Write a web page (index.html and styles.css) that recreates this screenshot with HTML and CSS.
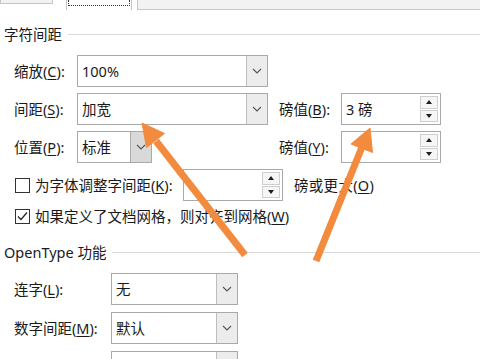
FILE: index.html
```html
<!DOCTYPE html>
<html lang="zh-CN">
<head>
<meta charset="utf-8">
<title>字体 - 高级</title>
<link rel="stylesheet" href="styles.css">
</head>
<body>
<div class="tabs">
  <div class="tab-left"></div>
  <div class="tab-active"><div class="focus"></div></div>
  <div class="tab-rest"></div>
</div>

<div class="group-title first"><span>字符间距</span><i class="rule"></i></div>
<div class="section">
  <div class="row">
    <span class="lbl">缩放(<u>C</u>):</span>
    <div class="combo wide"><span class="val">100%</span><span class="drop"><svg width="10" height="6" viewBox="0 0 10 6"><path d="M1 1 L5 5 L9 1" fill="none" stroke="#555" stroke-width="1.1"/></svg></span></div>
  </div>
  <div class="row">
    <span class="lbl">间距(<u>S</u>):</span>
    <div class="combo wide"><span class="val">加宽</span><span class="drop"><svg width="10" height="6" viewBox="0 0 10 6"><path d="M1 1 L5 5 L9 1" fill="none" stroke="#555" stroke-width="1.1"/></svg></span></div>
    <span class="lbl2">磅值(<u>B</u>):</span>
    <div class="spin"><span class="val">3 磅</span><span class="spin-btns"><i class="up"></i><i class="down"></i></span></div>
  </div>
  <div class="row">
    <span class="lbl">位置(<u>P</u>):</span>
    <div class="combo narrow"><span class="val">标准</span><span class="drop pressed"><svg width="10" height="6" viewBox="0 0 10 6"><path d="M1 1 L5 5 L9 1" fill="none" stroke="#555" stroke-width="1.1"/></svg></span></div>
    <span class="lbl2 far">磅值(<u>Y</u>):</span>
    <div class="spin"><span class="val"></span><span class="spin-btns"><i class="up"></i><i class="down"></i></span></div>
  </div>
  <div class="row">
    <span class="check"></span>
    <span class="check-lbl fixed">为字体调整字间距(<u>K</u>):</span>
    <div class="spin"><span class="val"></span><span class="spin-btns"><i class="up"></i><i class="down"></i></span></div>
    <span class="after">磅或更大(<u>O</u>)</span>
  </div>
  <div class="row short">
    <span class="check"><svg width="13" height="13" viewBox="0 0 13 13"><path d="M2 6.5 L5 9.5 L11 2.5" fill="none" stroke="#222" stroke-width="1.2"/></svg></span>
    <span class="check-lbl">如果定义了文档网格，则对齐到网格(<u>W</u>)</span>
  </div>
</div>

<div class="group-title second"><span>OpenType 功能</span><i class="rule"></i></div>
<div class="section ot">
  <div class="row">
    <span class="lbl">连字(<u>L</u>):</span>
    <div class="combo mid"><span class="val">无</span><span class="drop"><svg width="10" height="6" viewBox="0 0 10 6"><path d="M1 1 L5 5 L9 1" fill="none" stroke="#555" stroke-width="1.1"/></svg></span></div>
  </div>
  <div class="row">
    <span class="lbl">数字间距(<u>M</u>):</span>
    <div class="combo mid"><span class="val">默认</span><span class="drop"><svg width="10" height="6" viewBox="0 0 10 6"><path d="M1 1 L5 5 L9 1" fill="none" stroke="#555" stroke-width="1.1"/></svg></span></div>
  </div>
  <div class="row last">
    <span class="lbl"></span>
    <div class="combo mid"><span class="val"></span><span class="drop"></span></div>
  </div>
</div>

<svg class="arrows" width="480" height="359" viewBox="0 0 480 359">
  <g fill="#f38b3e" stroke="#f38b3e">
    <line x1="245" y1="255" x2="156" y2="141" stroke-width="7"/>
    <polygon points="142,123 164.5,133.5 146.5,147.5" stroke-width="1" stroke-linejoin="round"/>
    <line x1="316" y1="261" x2="362" y2="147" stroke-width="7"/>
    <polygon points="370,128 372.5,152.5 351,144" stroke-width="1" stroke-linejoin="round"/>
  </g>
</svg>
</body>
</html>
```

FILE: styles.css
```css
html, body {
  margin: 0;
  padding: 0;
}
html {
  overflow: hidden;
}
body {
  width: 480px;
  height: 359px;
  overflow: hidden;
  background: #ffffff;
  color: #1a1a1a;
  font-family: "Noto Sans", "Noto Sans CJK SC", sans-serif;
  font-size: 14.5px;
  line-height: 20px;
  position: relative;
}
u {
  text-decoration: underline;
  text-underline-offset: 2px;
}

/* tab strip */
.tabs {
  display: flex;
  height: 10px;
}
.tab-left {
  width: 53px;
  height: 4px;
  box-sizing: border-box;
  background: #f2f2f2;
  border: 1px solid #c6c6c6;
  border-top: 0;
}
.tab-active {
  width: 66px;
  margin-left: 13px;
  height: 10px;
  box-sizing: border-box;
  border-left: 1px solid #c6c6c6;
  border-right: 1px solid #c6c6c6;
  padding: 0 1px;
}
.focus {
  height: 6px;
  box-sizing: border-box;
  border: 1px dotted #333;
  border-top: 0;
}
.tab-rest {
  flex: 1;
  margin-left: 5px;
  height: 10px;
  box-sizing: border-box;
  background: #f2f2f2;
  border-left: 1px solid #c6c6c6;
  border-bottom: 1px solid #c6c6c6;
}

/* group titles */
.group-title {
  display: flex;
  align-items: center;
  gap: 6px;
  height: 24px;
  padding-left: 4px;
}
.group-title.first { margin-top: 12px; }
.group-title.second { margin-top: 13px; }
.rule {
  flex: 1;
  height: 1px;
  background: #dadada;
}

/* rows */
.section {
  display: flex;
  flex-direction: column;
  gap: 6px;
  margin-top: 9px;
  padding-left: 14px;
}
.section.ot { gap: 7px; }
.row {
  display: flex;
  align-items: center;
  height: 32px;
  flex: none;
}
.row.short {
  height: 22px;
  margin-top: -2px;
}
.row.last {
  height: 8px;
  align-items: flex-start;
  overflow: hidden;
}
.lbl { width: 63px; white-space: nowrap; }
.ot .lbl { width: 97px; }
.lbl2 { margin-left: 11px; width: 62px; white-space: nowrap; }
.lbl2.far { margin-left: 127px; }

.combo {
  box-sizing: border-box;
  height: 32px;
  border: 1px solid #a9a9a9;
  background: #fff;
  display: flex;
  flex: none;
}
.combo.wide { width: 191px; }
.combo.narrow { width: 75px; }
.combo.mid { width: 127px; }
.val {
  flex: 1;
  padding-left: 4px;
  line-height: 30px;
  white-space: nowrap;
  overflow: hidden;
}
.drop {
  width: 21px;
  box-sizing: border-box;
  border-left: 1px solid #bdbdbd;
  background: #ececec;
  display: flex;
  align-items: center;
  justify-content: center;
}
.drop.pressed { background: #d9d9d9; border-left-color: #a9a9a9; }

.spin {
  box-sizing: border-box;
  width: 100px;
  height: 32px;
  border: 1px solid #a9a9a9;
  background: #fff;
  display: flex;
  flex: none;
}
.spin-btns {
  width: 18px;
  margin: 2px 2px 2px 0;
  display: flex;
  flex-direction: column;
  gap: 1px;
}
.spin-btns i {
  flex: 1;
  box-sizing: border-box;
  border: 1px solid #cfcfcf;
  background: #f6f6f6;
  display: flex;
  align-items: center;
  justify-content: center;
}
.spin-btns i::before {
  content: "";
  width: 0;
  height: 0;
  border-left: 3.5px solid transparent;
  border-right: 3.5px solid transparent;
}
.spin-btns .up::before { border-bottom: 4px solid #1e1e1e; }
.spin-btns .down::before { border-top: 4px solid #1e1e1e; }

.check {
  width: 15px;
  height: 15px;
  box-sizing: border-box;
  border: 1px solid #333;
  margin-left: 1px;
  display: flex;
  align-items: center;
  justify-content: center;
  flex: none;
}
.check-lbl { margin-left: 5px; white-space: nowrap; }
.check-lbl.fixed { width: 148px; }
.after { margin-left: 11px; white-space: nowrap; letter-spacing: 0.3px; }

.arrows {
  position: absolute;
  left: 0;
  top: 0;
  pointer-events: none;
}
```
